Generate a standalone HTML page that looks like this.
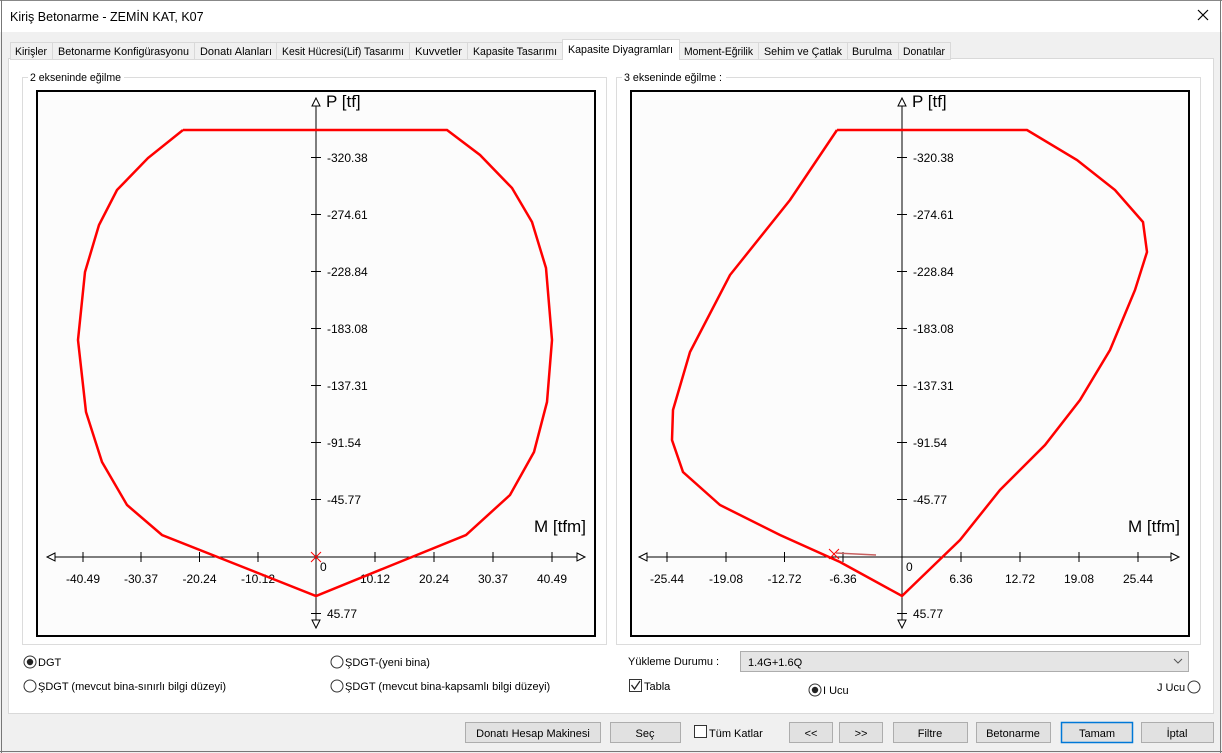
<!DOCTYPE html>
<html><head><meta charset="utf-8">
<style>
html,body{margin:0;padding:0;width:1222px;height:753px;overflow:hidden;background:#f0f0f0}
svg{display:block}
text{font-family:"Liberation Sans",sans-serif}
</style></head><body>
<svg width="1222" height="753" viewBox="0 0 1222 753" xmlns="http://www.w3.org/2000/svg">
<rect x="0" y="0" width="1222" height="753" fill="#f0f0f0"/>
<rect x="0" y="0" width="1222" height="32" fill="#fff"/>
<line x1="0" y1="0.5" x2="1222" y2="0.5" stroke="#888"/>
<line x1="1.5" y1="0" x2="1.5" y2="753" stroke="#777"/>
<line x1="1220.5" y1="0" x2="1220.5" y2="753" stroke="#777"/>
<line x1="0" y1="751.5" x2="1222" y2="751.5" stroke="#777"/>
<text x="10" y="21" font-size="12.5" fill="#000">Kiriş Betonarme - ZEMİN KAT, K07</text>
<path d="M1198 10 L1208 20 M1208 10 L1198 20" stroke="#000" stroke-width="1.2"/>

<rect x="8.5" y="58.5" width="1205" height="655" fill="#fff" stroke="#d9d9d9"/>
<g font-size="11" fill="#000" lengthAdjust="spacingAndGlyphs">
<rect x="10.5" y="42.5" width="42" height="17" fill="#f0f0f0" stroke="#d9d9d9"/><text x="15" y="55" textLength="32" lengthAdjust="spacingAndGlyphs">Kirişler</text>
<rect x="52.5" y="42.5" width="142" height="17" fill="#f0f0f0" stroke="#d9d9d9"/><text x="58" y="55" textLength="131" lengthAdjust="spacingAndGlyphs">Betonarme Konfigürasyonu</text>
<rect x="194.5" y="42.5" width="82" height="17" fill="#f0f0f0" stroke="#d9d9d9"/><text x="200" y="55" textLength="72" lengthAdjust="spacingAndGlyphs">Donatı Alanları</text>
<rect x="276.5" y="42.5" width="133" height="17" fill="#f0f0f0" stroke="#d9d9d9"/><text x="282" y="55" textLength="122" lengthAdjust="spacingAndGlyphs">Kesit Hücresi(Lif) Tasarımı</text>
<rect x="409.5" y="42.5" width="58" height="17" fill="#f0f0f0" stroke="#d9d9d9"/><text x="415" y="55" textLength="47" lengthAdjust="spacingAndGlyphs">Kuvvetler</text>
<rect x="467.5" y="42.5" width="95" height="17" fill="#f0f0f0" stroke="#d9d9d9"/><text x="473" y="55" textLength="84" lengthAdjust="spacingAndGlyphs">Kapasite Tasarımı</text>
<rect x="562.5" y="39.5" width="117" height="20" fill="#fff" stroke="#d9d9d9"/><text x="568" y="53" textLength="105" lengthAdjust="spacingAndGlyphs">Kapasite Diyagramları</text>
<rect x="679.5" y="42.5" width="79" height="17" fill="#f0f0f0" stroke="#d9d9d9"/><text x="684" y="55" textLength="69" lengthAdjust="spacingAndGlyphs">Moment-Eğrilik</text>
<rect x="758.5" y="42.5" width="89" height="17" fill="#f0f0f0" stroke="#d9d9d9"/><text x="764" y="55" textLength="78" lengthAdjust="spacingAndGlyphs">Sehim ve Çatlak</text>
<rect x="847.5" y="42.5" width="51" height="17" fill="#f0f0f0" stroke="#d9d9d9"/><text x="852" y="55" textLength="40" lengthAdjust="spacingAndGlyphs">Burulma</text>
<rect x="898.5" y="42.5" width="52" height="17" fill="#f0f0f0" stroke="#d9d9d9"/><text x="903" y="55" textLength="42" lengthAdjust="spacingAndGlyphs">Donatılar</text>
</g>
<line x1="563" y1="59" x2="679" y2="59" stroke="#fff" stroke-width="2"/>

<rect x="22.5" y="77.5" width="584" height="567" fill="none" stroke="#dcdcdc"/>
<rect x="28" y="71" width="96" height="12" fill="#fff"/>
<text x="30" y="81" font-size="11" textLength="91" lengthAdjust="spacingAndGlyphs">2 ekseninde eğilme</text>
<rect x="616.5" y="77.5" width="584" height="567" fill="none" stroke="#dcdcdc"/>
<rect x="622" y="71" width="104" height="12" fill="#fff"/>
<text x="624" y="81" font-size="11" textLength="98" lengthAdjust="spacingAndGlyphs">3 ekseninde eğilme :</text>

<rect x="37" y="91" width="558" height="545" fill="#fcfcfc" stroke="#000" stroke-width="2"/>
<g stroke="#000" stroke-width="1" fill="none">
<line x1="316" y1="104" x2="316" y2="620"/>
<line x1="54" y1="557" x2="578" y2="557"/>
<path d="M312 106 L316 98 L320 106 Z" fill="#fff"/>
<path d="M312 620 L316 628 L320 620 Z" fill="#fff"/>
<path d="M55 553 L47 557 L55 561 Z" fill="#fff"/>
<path d="M577 553 L585 557 L577 561 Z" fill="#fff"/>
<path d="M311 157.5h10M311 214.5h10M311 271.5h10M311 328.5h10M311 385.5h10M311 442.5h10M311 499.5h10M311 613.5h10"/>
<path d="M83 552v10M141 552v10M199.5 552v10M258 552v10M375 552v10M434 552v10M493 552v10M552 552v10"/>
</g>
<g font-size="12" fill="#000">
<text x="327" y="162">-320.38</text><text x="327" y="219">-274.61</text><text x="327" y="276">-228.84</text>
<text x="327" y="333">-183.08</text><text x="327" y="390">-137.31</text><text x="327" y="447">-91.54</text>
<text x="327" y="504">-45.77</text><text x="327" y="618">45.77</text><text x="320" y="571">0</text>
<g text-anchor="middle"><text x="83" y="583">-40.49</text><text x="141" y="583">-30.37</text><text x="199.5" y="583">-20.24</text><text x="258" y="583">-10.12</text>
<text x="375" y="583">10.12</text><text x="434" y="583">20.24</text><text x="493" y="583">30.37</text><text x="552" y="583">40.49</text></g>
</g>
<text x="326" y="107" font-size="17">P [tf]</text>
<text x="534" y="532" font-size="17">M [tfm]</text>
<polyline fill="none" stroke="#f00" stroke-width="2.5" points="183,130 447,130 480,155 512,188 532,222 546,268 552,340 547,402 534,452 510,495 466,535 316,596 162,535 127,505 102,462 86,412 78,340 85,272 99,225 117,190 148,158 183,130"/>
<path d="M311 552 L321 562 M321 552 L311 562" stroke="#f00"/>

<rect x="631" y="91" width="558" height="545" fill="#fcfcfc" stroke="#000" stroke-width="2"/>
<g stroke="#000" stroke-width="1" fill="none">
<line x1="902" y1="104" x2="902" y2="620"/>
<line x1="646" y1="557" x2="1172" y2="557"/>
<path d="M898 106 L902 98 L906 106 Z" fill="#fff"/>
<path d="M898 620 L902 628 L906 620 Z" fill="#fff"/>
<path d="M647 553 L639 557 L647 561 Z" fill="#fff"/>
<path d="M1171 553 L1179 557 L1171 561 Z" fill="#fff"/>
<path d="M897 157.5h10M897 214.5h10M897 271.5h10M897 328.5h10M897 385.5h10M897 442.5h10M897 499.5h10M897 613.5h10"/>
<path d="M667 552v10M726 552v10M784.5 552v10M843 552v10M961 552v10M1020 552v10M1079 552v10M1138 552v10"/>
</g>
<g font-size="12" fill="#000">
<text x="913" y="162">-320.38</text><text x="913" y="219">-274.61</text><text x="913" y="276">-228.84</text>
<text x="913" y="333">-183.08</text><text x="913" y="390">-137.31</text><text x="913" y="447">-91.54</text>
<text x="913" y="504">-45.77</text><text x="913" y="618">45.77</text><text x="906" y="571">0</text>
<g text-anchor="middle"><text x="667" y="583">-25.44</text><text x="726" y="583">-19.08</text><text x="784.5" y="583">-12.72</text><text x="843" y="583">-6.36</text>
<text x="961" y="583">6.36</text><text x="1020" y="583">12.72</text><text x="1079" y="583">19.08</text><text x="1138" y="583">25.44</text></g>
</g>
<text x="912" y="107" font-size="17">P [tf]</text>
<text x="1128" y="532" font-size="17">M [tfm]</text>
<polyline fill="none" stroke="#f00" stroke-width="2.5" points="837,130 1027,130 1077,160 1115,190 1143,222 1147,252 1135,290 1110,350 1080,400 1045,445 1000,490 960,540 902,596 840,562 780,535 720,505 683,472 672,440 673,410 690,352 730,275 790,200 837,130"/>
<path d="M829 549 L839 559 M839 549 L829 559" stroke="#f00"/>
<path d="M836 553 L876 555" stroke="#c86060" stroke-width="1.5"/>

<g font-size="11" fill="#000">
<circle cx="30" cy="662" r="6" fill="#fff" stroke="#333"/><circle cx="30" cy="662" r="3.2" fill="#222"/>
<text x="38" y="666">DGT</text>
<circle cx="30" cy="686" r="6" fill="#fff" stroke="#333"/><text x="38" y="690">ŞDGT (mevcut bina-sınırlı bilgi düzeyi)</text>
<circle cx="337" cy="662" r="6" fill="#fff" stroke="#333"/><text x="345" y="666">ŞDGT-(yeni bina)</text>
<circle cx="337" cy="686" r="6" fill="#fff" stroke="#333"/><text x="345" y="690">ŞDGT (mevcut bina-kapsamlı bilgi düzeyi)</text>
<text x="628" y="665">Yükleme Durumu :</text>
<rect x="740.5" y="651.5" width="448" height="20" fill="#e5e5e5" stroke="#adadad"/>
<text x="748" y="666">1.4G+1.6Q</text>
<path d="M1174 659 L1178 663 L1182 659" fill="none" stroke="#555"/>
<rect x="629.5" y="679.5" width="12" height="12" fill="#fff" stroke="#333"/>
<path d="M631.5 685 L634.5 689 L640 681" fill="none" stroke="#222" stroke-width="1.3"/>
<text x="644" y="690">Tabla</text>
<circle cx="815" cy="690" r="6" fill="#fff" stroke="#333"/><circle cx="815" cy="690" r="3.2" fill="#222"/>
<text x="823" y="694">I Ucu</text>
<text x="1157" y="691">J Ucu</text>
<circle cx="1194" cy="687" r="6" fill="#fff" stroke="#333"/>
</g>

<g font-size="11" fill="#000" text-anchor="middle">
<rect x="465.5" y="722.5" width="135" height="20" fill="#e1e1e1" stroke="#adadad"/><text x="533" y="737">Donatı Hesap Makinesi</text>
<rect x="610.5" y="722.5" width="70" height="20" fill="#e1e1e1" stroke="#adadad"/><text x="645" y="737">Seç</text>
<rect x="694.5" y="725.5" width="12" height="12" fill="#fff" stroke="#333"/><text x="709" y="737" text-anchor="start">Tüm Katlar</text>
<rect x="789.5" y="722.5" width="43" height="20" fill="#e1e1e1" stroke="#adadad"/><text x="811" y="737">&lt;&lt;</text>
<rect x="839.5" y="722.5" width="43" height="20" fill="#e1e1e1" stroke="#adadad"/><text x="861" y="737">&gt;&gt;</text>
<rect x="893.5" y="722.5" width="74" height="20" fill="#e1e1e1" stroke="#adadad"/><text x="930" y="737">Filtre</text>
<rect x="976.5" y="722.5" width="74" height="20" fill="#e1e1e1" stroke="#adadad"/><text x="1013" y="737">Betonarme</text>
<rect x="1061.5" y="722.5" width="71" height="20" fill="#e1e1e1" stroke="#0078d7" stroke-width="1.5"/><text x="1097" y="737">Tamam</text>
<rect x="1141.5" y="722.5" width="72" height="20" fill="#e1e1e1" stroke="#adadad"/><text x="1177" y="737">İptal</text>
</g>
</svg>
</body></html>
